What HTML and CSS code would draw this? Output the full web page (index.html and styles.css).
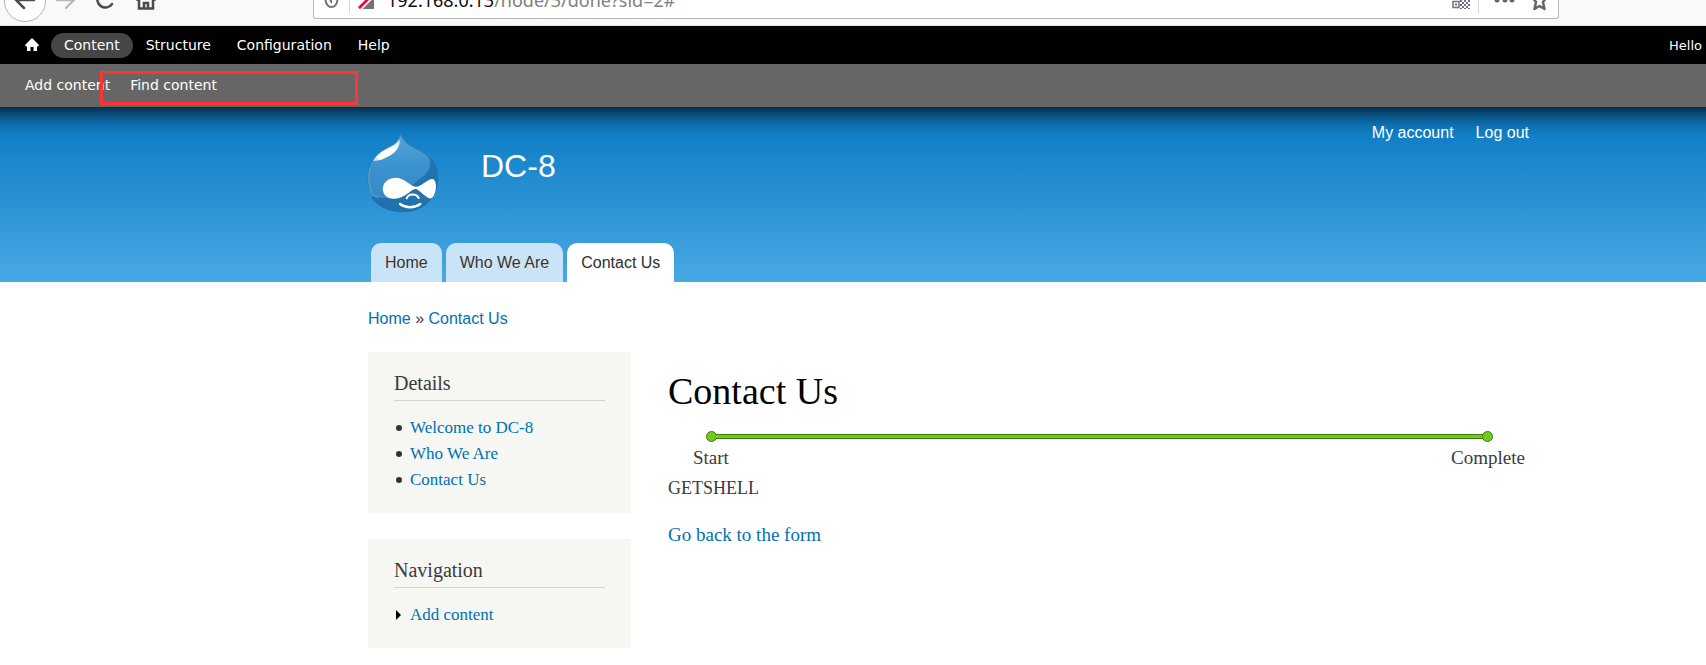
FILE: index.html
```html
<!DOCTYPE html>
<html lang="en">
<head>
<meta charset="utf-8">
<title>Contact Us | DC-8</title>
<link rel="stylesheet" href="styles.css">
</head>
<body>
<div class="browser">
  <svg class="nav-icons" width="170" height="26" viewBox="0 0 170 26" aria-hidden="true">
    <circle cx="25" cy="1" r="20.500" fill="#fff" stroke="#b4b4b4"/>
    <path d="M34 0H17M24 8l-8-8 8-8" fill="none" stroke="#4a4a4f" stroke-width="2.500" stroke-linecap="round"/>
    <path d="M57 0h17M66 8l8-8-8-8" fill="none" stroke="#b9b9bb" stroke-width="2.300" stroke-linecap="round"/>
    <path d="M112 4A8 8 0 1 1 110 -7" fill="none" stroke="#4a4a4f" stroke-width="2.500" stroke-linecap="round"/>
    <path d="M136 0l10-9 10 9M139 0v8.500h14V0M144 9V3h4v6" fill="none" stroke="#4a4a4f" stroke-width="2.500"/>
  </svg>
  <div class="address">
    <svg class="site-icons" width="62" height="19" viewBox="0 0 62 19" aria-hidden="true">
      <path d="M11 -6C11 2 13 7 17.500 7S24 2 24 -6" fill="none" stroke="#737373" stroke-width="2"/>
      <path d="M18 -5V3.500C16 3 15 0 15 -5z" fill="#737373"/>
      <path d="M35.500 0V13" stroke="#d7d7db"/>
      <path d="M45 9V-5H60V9z" fill="#737373"/><path d="M44 10L60-6" stroke="#fff" stroke-width="5"/><path d="M45 8L58-5" stroke="#f5003d" stroke-width="2.500"/>
      <path d="M44 -6H58L44 8z" fill="#fff"/><path d="M45 8L58-5" stroke="#f5003d" stroke-width="2.500"/>
    </svg>
    <div class="url"><span class="host">192.168.0.13</span>/node/3/done?sid=2#</div>
    <svg class="page-icons" width="110" height="19" viewBox="0 0 110 19" aria-hidden="true">
      <path d="M5 1.500h6v6H5z" fill="none" stroke="#6b7280" stroke-width="1.500"/><path d="M7 3.500h2v2H7z" fill="#6b7280"/>
      <path d="M13 0v9M17 0v9M21 0v9" stroke="#6b7280" stroke-width="2" stroke-dasharray="2 2"/>
      <path d="M15 2v7M19 2v7M5 -2v2M9 -2v2" stroke="#6b7280" stroke-width="2" stroke-dasharray="2 2"/>
      <path d="M30.500 0v13" stroke="#d7d7db"/>
      <circle cx="49" cy="0" r="2.500" fill="#666"/><circle cx="57" cy="0" r="2.500" fill="#666"/><circle cx="64" cy="0" r="2.500" fill="#666"/>
      <path d="M84 -3l4 5-1.500 7 5-3 5 3L95 2l4-5" fill="none" stroke="#666" stroke-width="2.500" stroke-linejoin="round"/>
    </svg>
  </div>
</div>

<div class="toolbar">
  <nav class="admin-menu" aria-label="Administration">
    <a href="#" class="home" aria-label="Dashboard"><svg width="16" height="14" viewBox="0 0 16 14" aria-hidden="true"><path d="M8 0l7 7-1 1.500h-1V13H9.500V9h-3v4H3V8.500H2L1 7z" fill="#fff"/></svg></a>
    <a href="#" class="active">Content</a>
    <a href="#">Structure</a>
    <a href="#">Configuration</a>
    <a href="#">Help</a>
  </nav>
  <span class="hello">Hello</span>
</div>
<nav class="shortcuts" aria-label="Shortcuts">
  <a href="#">Add content</a>
  <a href="#">Find content</a>
  <span class="highlight"></span>
</nav>

<header class="header">
  <div class="container header-inner">
    <div class="branding">
      <a href="#" aria-label="Home"><svg class="logo" width="75" height="83" viewBox="15 18 225 249" aria-hidden="true">
        <defs>
          <linearGradient id="drop" x1="0" y1="0" x2="0" y2="1"><stop offset="0" stop-color="#55a5da"/><stop offset=".45" stop-color="#3a91cd"/><stop offset="1" stop-color="#3987bf"/></linearGradient>
          <linearGradient id="shine" x1="1" y1="0" x2="0" y2="1"><stop offset="0" stop-color="#fff" stop-opacity=".7"/><stop offset=".35" stop-color="#fff"/><stop offset=".8" stop-color="#fff"/><stop offset="1" stop-color="#fff" stop-opacity=".5"/></linearGradient>
        </defs>
        <path d="M122 25C128 48 145 61 170 72C208 89 234 119 234 161C234 220 187 261 129 261C68 261 23 218 23 158C23 116 46 87 76 70C104 56 117 49 122 25Z" fill="url(#drop)" stroke="#35759f" stroke-opacity=".7" stroke-width="3"/>
        <path d="M205 94C219 120 206 147 172 167C150 187 128 209 98 217C75 221 49 218 33 216C51 246 88 261 129 261C187 261 234 220 234 161C234 132 224 109 205 94Z" fill="#1a6aa5" opacity=".75"/>
        <path d="M119 42C121 66 108 84 80 97C62 107 53 107 39 109C49 91 65 79 84 70C103 61 113 53 119 42Z" fill="url(#shine)"/>
        <path d="M30 128C24 159 26 184 36 208L55 216" fill="none" stroke="#8fc4e6" stroke-opacity=".35" stroke-width="4"/>
        <path d="M105 158C132 157 147 181 166 185C184 187 203 160 219 162C232 168 230 203 218 217C210 229 191 207 169 191C152 192 136 219 104 221C59 224 54 163 105 158Z" fill="#fff"/>
        <path d="M140 220C145 205 169 204 176 219" fill="none" stroke="#fff" stroke-width="6" stroke-linecap="round"/>
        <path d="M120 237C137 250 163 250 181 237" fill="none" stroke="#fff" stroke-width="7" stroke-linecap="round"/>
      </svg></a>
      <a href="#" class="site-name">DC-8</a>
    </div>
    <nav class="user-menu" aria-label="User menu"><a href="#">My account</a><a href="#">Log out</a></nav>
  </div>
  <nav class="container tabs" aria-label="Main menu">
    <a href="#">Home</a><a href="#">Who We Are</a><a href="#" class="current">Contact Us</a>
  </nav>
</header>

<div class="container page">
  <nav class="breadcrumb" aria-label="Breadcrumb"><a href="#">Home</a> » <a href="#">Contact Us</a></nav>
  <div class="columns">
    <aside class="sidebar">
      <section class="block">
        <h2>Details</h2>
        <ul><li><a href="#">Welcome to DC-8</a></li><li><a href="#">Who We Are</a></li><li><a href="#">Contact Us</a></li></ul>
      </section>
      <section class="block">
        <h2>Navigation</h2>
        <ul class="collapsed"><li><a href="#">Add content</a></li></ul>
      </section>
    </aside>
    <main class="main">
      <h1>Contact Us</h1>
      <div class="progress">
        <div class="track"><span class="dot"></span><span class="bar"></span><span class="dot"></span></div>
        <div class="steps"><span>Start</span><span>Complete</span></div>
      </div>
      <p>GETSHELL</p>
      <a href="#" class="back">Go back to the form</a>
    </main>
  </div>
</div>
</body>
</html>
```

FILE: styles.css
```css
* { box-sizing: border-box; }
body { margin: 0; background: #fff; color: #3b3b3b; font-family: Georgia, "Liberation Serif", serif; overflow-x: hidden; }
a { color: #0071b3; text-decoration: none; }
svg { display: block; }

.browser { display: flex; height: 26px; background: #f9f9fa; border-bottom: 1px solid #e0e0e1; overflow: hidden; }
.nav-icons { flex: none; margin-right: 143px; }
.address { display: flex; flex: 1; height: 19px; margin-right: 147px; background: #fff; border: 1px solid #b8b8b8; border-top: 0; border-radius: 0 0 3px 3px; }
.url { flex: 1; margin: -11px 0 0 11px; font: 18px/22px "Noto Sans", sans-serif; color: #808080; }
.host { color: #0c0c0d; }

.toolbar { display: flex; justify-content: space-between; align-items: center; height: 38px; padding: 0 4px 0 18px; background: #000; color: #fff; font-family: Verdana, "DejaVu Sans", sans-serif; }
.admin-menu { display: flex; align-items: center; font-size: 14px; }
.admin-menu a { padding: 0 13px; line-height: 25px; border-radius: 13px; color: #fff; }
.admin-menu .home { padding: 0 11px 0 6px; }
.admin-menu .active { background: #464646; }
.hello { font-size: 13px; }
.shortcuts { position: relative; display: flex; gap: 20px; height: 43px; padding: 12px 25px; background: #666; font: 14px/18px Verdana, "DejaVu Sans", sans-serif; }
.shortcuts a { color: #fff; }
.highlight { position: absolute; left: 100px; top: 7px; width: 258px; height: 34px; border: 3px solid #ff3535; }

.container { max-width: 1200px; margin-left: 353px; padding: 0 15px; }
.header { background: linear-gradient(#062e4a 0, #0a5485 9px, #0e72b3 19px, #1280c7 30px, #48a9e4 100%); font-family: Arial, "Liberation Sans", sans-serif; }
.header-inner { display: flex; justify-content: space-between; height: 136px; padding: 24px 24px 0 12px; }
.branding { display: flex; gap: 41px; }
.site-name { padding-top: 17px; color: #fff; font-size: 32px; line-height: 36px; }
.user-menu { display: flex; gap: 22px; margin-top: -8px; font-size: 16px; line-height: 20px; }
.user-menu a { color: #fff; }
.tabs { display: flex; gap: 4px; padding-left: 18px; }
.tabs a { padding: 0 14px; border-radius: 10px 10px 0 0; background: #c8e4f6; color: #333; font-size: 16px; line-height: 39px; text-shadow: 0 1px #eee; }
.tabs .current { background: #fff; }

.breadcrumb { padding: 26px 0 22px; font: 16px/22px Arial, "Liberation Sans", sans-serif; }
.columns { display: flex; gap: 37px; }
.sidebar { display: flex; flex-direction: column; gap: 26px; width: 263px; flex: none; }
.block { padding: 19px 26px 20px; background: #f6f6f2; }
.block h2 { margin: 0 0 14px; padding-bottom: 5px; border-bottom: 1px solid #d3d3d0; font-size: 20px; font-weight: 400; line-height: 24px; }
.block ul { margin: 0; padding: 0; list-style: none; font-size: 17px; line-height: 26px; }
.block li { display: flex; align-items: center; gap: 8px; }
.block li::before { content: ""; width: 6px; height: 6px; margin-left: 2px; border-radius: 50%; background: #333; }
.block .collapsed li::before { width: 0; height: 0; margin-right: 1px; border: 5px solid transparent; border-left-color: #000; border-right: 0; border-radius: 0; background: none; }
.main { flex: 1; padding-right: 9px; }
.main h1 { margin: 17px 0 18px; color: #000; font-size: 38px; font-weight: 400; line-height: 44px; }
.track { display: flex; align-items: center; padding: 0 36px 0 38px; }
.dot { width: 11px; height: 11px; border: 1px solid #3b7e0a; border-radius: 50%; background: #72c922; }
.bar { flex: 1; height: 5px; margin: 0 -1px; border: 1px solid #3b7e0a; border-width: 1px 0; background: #72c922; }
.steps { display: flex; justify-content: space-between; padding: 4px 4px 0 25px; font-size: 19px; line-height: 24px; }
.main p { margin: 5px 0 22px; font-size: 18px; line-height: 26px; }
.back { font-size: 19px; line-height: 24px; }
```
